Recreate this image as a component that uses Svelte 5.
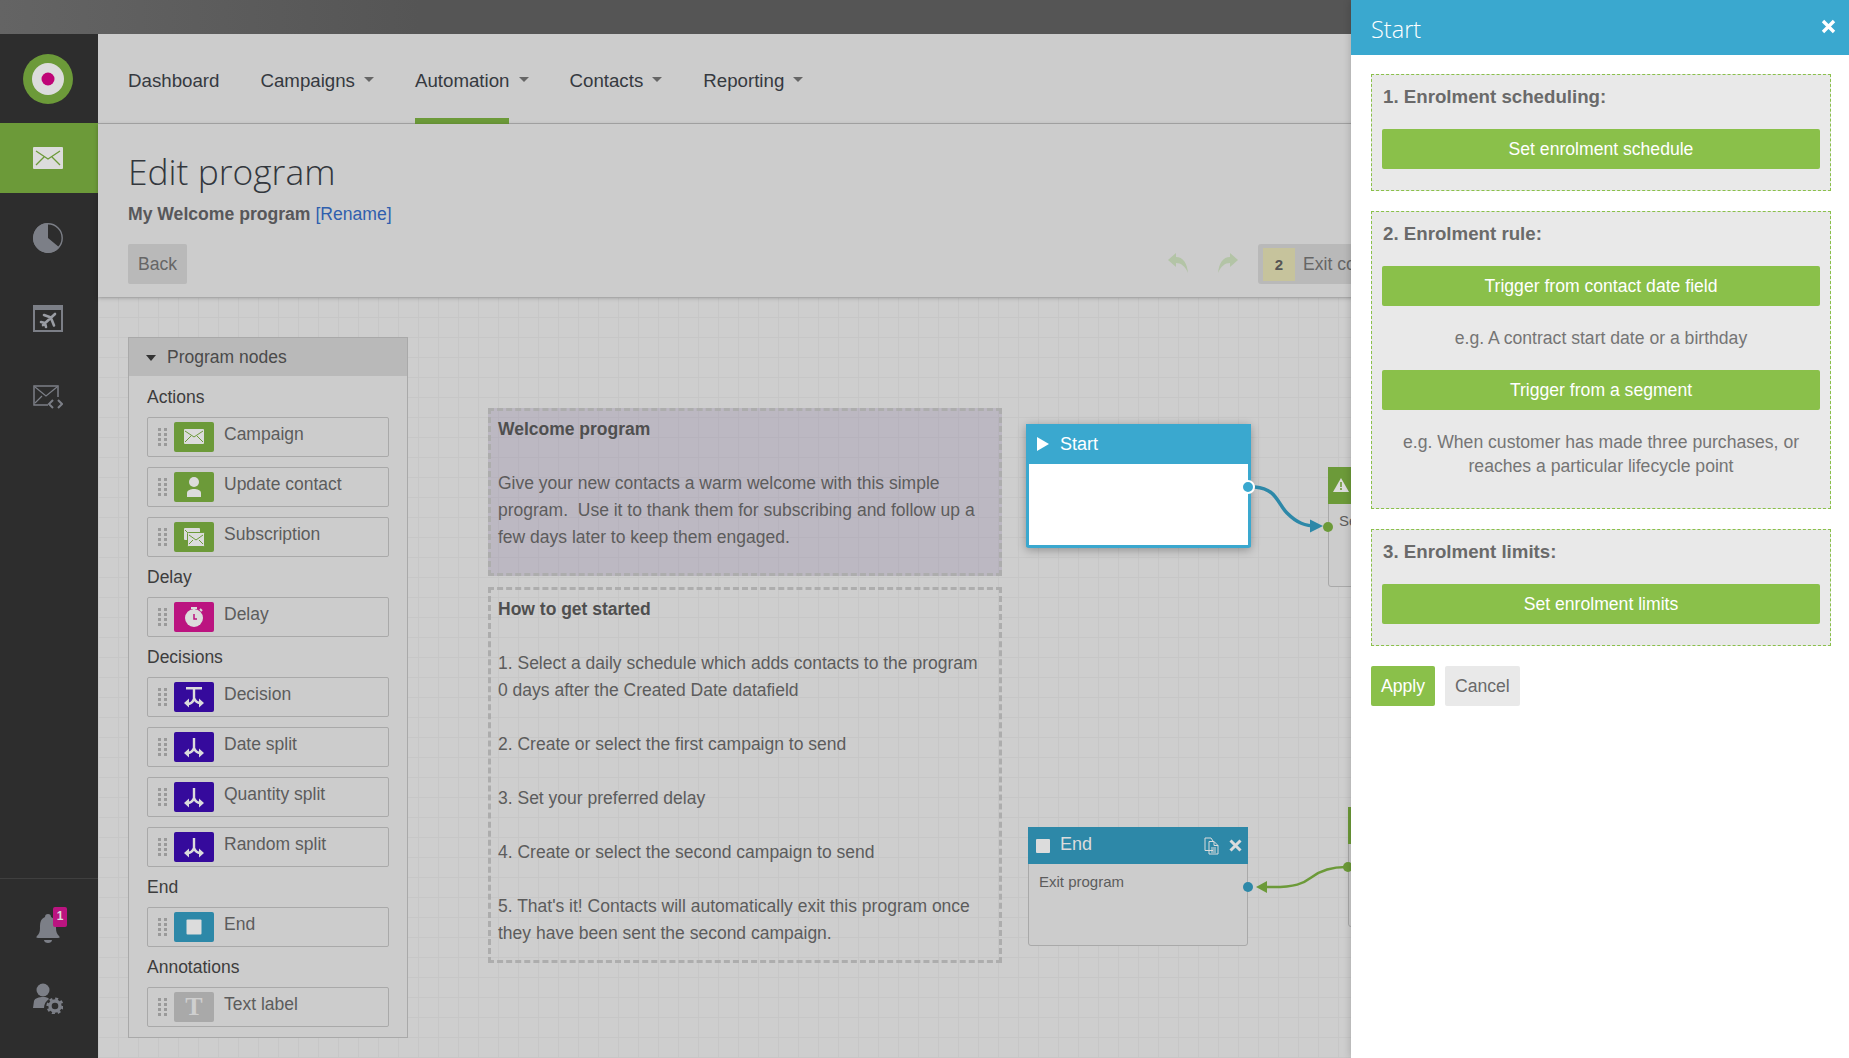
<script>
    const navItems = [
        { name: 'Dashboard' },
        { name: 'Campaigns', caret: true },
        { name: 'Automation', caret: true, active: true },
        { name: 'Contacts', caret: true },
        { name: 'Reporting', caret: true },
    ]

    const groups = [
        { title: 'Actions', items: [
            { name: 'Campaign', icon: 'mail', tone: 'green' },
            { name: 'Update contact', icon: 'person', tone: 'green' },
            { name: 'Subscription', icon: 'mails', tone: 'green' },
        ] },
        { title: 'Delay', items: [
            { name: 'Delay', icon: 'timer', tone: 'pink' },
        ] },
        { title: 'Decisions', items: [
            { name: 'Decision', icon: 'decision', tone: 'purple' },
            { name: 'Date split', icon: 'split', tone: 'purple' },
            { name: 'Quantity split', icon: 'split', tone: 'purple' },
            { name: 'Random split', icon: 'split', tone: 'purple' },
        ] },
        { title: 'End', items: [
            { name: 'End', icon: 'stop', tone: 'blue' },
        ] },
        { title: 'Annotations', items: [
            { name: 'Text label', icon: 'text', tone: 'grey' },
        ] },
    ]

    const started = [
        '1. Select a daily schedule which adds contacts to the program',
        '0 days after the Created Date datafield',
        '',
        '2. Create or select the first campaign to send',
        '',
        '3. Set your preferred delay',
        '',
        '4. Create or select the second campaign to send',
        '',
        "5. That's it! Contacts will automatically exit this program once",
        'they have been sent the second campaign.',
    ]
</script>

{#snippet nodeIcon(kind)}
    <svg width="40" height="30" viewBox="0 0 40 30">
        {#if kind === 'mail'}
            <rect x="10" y="7" width="20" height="15" rx="1" fill="#dcdcdc" />
            <path d="M11 9l9 6 9-6M11 20l6-6M29 20l-6-6" fill="none" stroke="#6c9a39" stroke-width="1" />
        {:else if kind === 'person'}
            <circle cx="20" cy="10" r="5" fill="#dcdcdc" />
            <path d="M13 25v-4c0-3 4-4 7-4s7 1 7 4v4z" fill="#dcdcdc" />
        {:else if kind === 'mails'}
            <rect x="10" y="6" width="16" height="12" rx="1" fill="#dcdcdc" />
            <path d="M11 8l3 3" fill="none" stroke="#6c9a39" />
            <rect x="13.500" y="10.500" width="17" height="14" rx="1" fill="#dcdcdc" stroke="#6c9a39" />
            <path d="M15 13l7 5 7-5M15 22l4-4M29 22l-4-4" fill="none" stroke="#6c9a39" />
        {:else if kind === 'timer'}
            <circle cx="20" cy="16" r="9" fill="#dcdcdc" />
            <rect x="17" y="5" width="6" height="2" fill="#dcdcdc" />
            <rect x="19" y="6" width="2" height="3" fill="#dcdcdc" />
            <path d="M26 7l2 2" stroke="#dcdcdc" stroke-width="2" />
            <path d="M20 12v5h3" fill="none" stroke="#bb1480" stroke-width="1.500" />
        {:else if kind === 'decision' || kind === 'split'}
            {#if kind === 'decision'}
                <rect x="12" y="5" width="16" height="2.500" fill="#dcdcdc" />
            {/if}
            <path d="M20 {kind === 'decision' ? 7 : 6}v10c-1 3-4 5-7 5M20 16c1 3 4 5 7 5" fill="none" stroke="#dcdcdc" stroke-width="2.400" />
            <path d="M10 21l5-4.500v9zM30 21l-5-4.500v9z" fill="#dcdcdc" />
        {:else if kind === 'stop'}
            <rect x="12.500" y="7.500" width="15" height="15" rx="1" fill="#dcdcdc" />
        {/if}
    </svg>
{/snippet}

<div class="page">
    <div class="top-strip"></div>

    <div class="shell">
        <aside class="sidebar">
            <div class="logo">
                <svg width="50" height="50" viewBox="0 0 50 50">
                    <circle cx="25" cy="25" r="25" fill="#6c9a39" />
                    <circle cx="25" cy="25" r="16" fill="#dcdcdc" />
                    <circle cx="25" cy="25" r="6.500" fill="#bf0477" />
                </svg>
            </div>
            <div class="side-item active">
                <svg width="30" height="23" viewBox="0 0 30 23">
                    <rect width="30" height="22" rx="1" fill="#dcdcdc" />
                    <path d="M3 4l12 8 12-8M3 18l8-8M27 18l-8-8" fill="none" stroke="#6c9a39" stroke-width="1.300" />
                </svg>
            </div>
            <div class="side-item">
                <svg width="30" height="30" viewBox="0 0 30 30">
                    <circle cx="15" cy="15" r="14.200" fill="none" stroke="#7c7f87" stroke-width="1.400" />
                    <path d="M15 0A15 15 0 1 0 26.500 24.600L15 15z" fill="#7c7f87" />
                </svg>
            </div>
            <div class="side-item">
                <svg width="30" height="27" viewBox="0 0 30 27">
                    <rect x="1" y="1" width="28" height="25" fill="none" stroke="#7c7f87" stroke-width="2" />
                    <rect width="30" height="5" fill="#7c7f87" />
                    <path d="M10 20L22 9M18 12.500L11 10M18 13l3 7.500M12 18l-4-1M12 18l1 4" fill="none" stroke="#9a9da4" stroke-width="2.600" stroke-linecap="round" />
                </svg>
            </div>
            <div class="side-item">
                <svg width="30" height="26" viewBox="0 0 30 26">
                    <path d="M15 20H1V1h24v11" fill="none" stroke="#7c7f87" stroke-width="1.500" />
                    <path d="M2 2l11 9 11-9M2 18l7-7" fill="none" stroke="#7c7f87" stroke-width="1.200" />
                    <path d="M20 15l-4 4 4 4M25 15l4 4-4 4" fill="none" stroke="#7c7f87" stroke-width="2" />
                </svg>
            </div>

            <div class="side-bottom">
                <div class="bell">
                    <svg width="24" height="32" viewBox="0 0 24 32">
                        <path d="M12 1c-2 0-3 1-3 3C4 6 4 11 4 15c0 4-1 6-3 8-1 1-1 2 1 2h20c2 0 2-1 1-2-2-2-3-4-3-8 0-4 0-9-5-11 0-2-1-3-3-3z" fill="#7c7f87" />
                        <path d="M8 27h8c0 2-2 3-4 3s-4-1-4-3z" fill="#7c7f87" />
                    </svg>
                    <span class="badge">1</span>
                </div>
                <svg class="user-gear" width="30" height="31" viewBox="0 0 30 31">
                    <circle cx="10" cy="7" r="6.500" fill="#7c7f87" />
                    <path d="M0 25l1-7c1-3 5-4 9-4 3 0 5 .5 6 2-3 2-5 5-5 9z" fill="#7c7f87" />
                    <circle cx="22" cy="23" r="5" fill="none" stroke="#7c7f87" stroke-width="3.400" />
                    <circle cx="22" cy="23" r="7.400" fill="none" stroke="#7c7f87" stroke-width="2.400" stroke-dasharray="3 2.800" />
                </svg>
            </div>
        </aside>

        <div class="main">
            <nav class="nav">
                {#each navItems as item}
                    <a class="nav-item" class:active={item.active}>
                        <span class="nav-label">{item.name}</span>
                        {#if item.caret}<i class="caret"></i>{/if}
                    </a>
                {/each}
            </nav>

            <header class="head">
                <h1>Edit program</h1>
                <p class="subtitle"><b>My Welcome program</b> <a>[Rename]</a></p>
                <div class="toolbar">
                    <button class="btn-grey">Back</button>
                    <div class="tools">
                        <svg width="20" height="20" viewBox="0 0 20 20"><path d="M0 7l8-7v4c7 0 11 6 12 16-3-7-7-10-12-10v4z" fill="#b3c4a6" /></svg>
                        <svg class="redo" width="20" height="20" viewBox="0 0 20 20"><path d="M20 7l-8-7v4C5 4 1 10 0 20c3-7 7-10 12-10v4z" fill="#b3c4a6" /></svg>
                        <button class="exit-btn"><span class="count">2</span>Exit contacts</button>
                    </div>
                </div>
            </header>

            <section class="canvas">
                <div class="palette">
                    <div class="palette-head"><i class="palette-arrow"></i>Program nodes</div>
                    <div class="palette-body">
                        {#each groups as group}
                            <div class="group-title">{group.title}</div>
                            {#each group.items as item}
                                <div class="palette-item">
                                    <span class="grip">{#each Array(8) as _}<i></i>{/each}</span>
                                    <span class="node-icon {item.tone}">
                                        {#if item.icon === 'text'}
                                            <span class="serif-t">T</span>
                                        {:else}
                                            {@render nodeIcon(item.icon)}
                                        {/if}
                                    </span>
                                    <span class="item-name">{item.name}</span>
                                </div>
                            {/each}
                        {/each}
                    </div>
                </div>

                <div class="note welcome">
                    <b>Welcome program</b><br /><br />
                    Give your new contacts a warm welcome with this simple<br />
                    program.&nbsp; Use it to thank them for subscribing and follow up a<br />
                    few days later to keep them engaged.
                </div>

                <div class="note started">
                    <b>How to get started</b><br /><br />
                    {#each started as line}
                        {line}<br />
                    {/each}
                </div>

                <div class="node start-node">
                    <div class="start-head">
                        <svg width="12" height="14" viewBox="0 0 12 14"><path d="M0 0l12 7-12 7z" fill="#fff" /></svg>
                        Start
                    </div>
                    <div class="start-body"></div>
                    <i class="port start-port"></i>
                </div>

                <div class="node end-node">
                    <div class="end-head">
                        <i class="end-square"></i>
                        <span>End</span>
                        <svg class="copy" width="16" height="18" viewBox="0 0 16 18">
                            <path d="M9 13.500H1V1h6l2 3M5 4.500h5l4 4V17H5zM10 4.500v4h4M7 11h5M7 13h5M7 15h5" fill="none" stroke="#dcdcdc" stroke-width="1" />
                        </svg>
                        <svg width="13" height="13" viewBox="0 0 13 13"><path d="M1.500 1.500l10 10M11.500 1.500l-10 10" stroke="#dcdcdc" stroke-width="3" /></svg>
                    </div>
                    <div class="end-text">Exit program</div>
                    <i class="port end-port"></i>
                </div>

                <div class="node step-node first">
                    <div class="step-head">
                        <svg width="16" height="14" viewBox="0 0 16 14"><path d="M8 0l8 14H0z" fill="#dcdcdc" /><path d="M8 4v5M8 10v2" stroke="#6c9a39" stroke-width="1.600" /></svg>
                    </div>
                    <div class="step-text">Select</div>
                    <i class="dot"></i>
                </div>
                <div class="node step-node second">
                    <div class="step-head"></div>
                    <i class="dot"></i>
                </div>

                <svg class="wire-start" width="80" height="50" viewBox="0 0 80 50">
                    <path d="M2 2c22 2 22 16 32 26s18 13 30 13" fill="none" stroke="#2d88a8" stroke-width="3.500" />
                    <path d="M70 41l-13-6.500v13z" fill="#2d88a8" />
                </svg>
                <svg class="wire-end" width="100" height="32" viewBox="0 0 100 32">
                    <path d="M10 25c30 1 38-4 46-10s18-10 34-10" fill="none" stroke="#6c9a39" stroke-width="2.500" />
                    <path d="M0 25l11-6v12z" fill="#6c9a39" />
                </svg>
            </section>
        </div>
    </div>

    <aside class="panel">
        <div class="panel-head">
            <span>Start</span>
            <svg width="15" height="15" viewBox="0 0 15 15"><path d="M2 2l11 11M13 2L2 13" stroke="#fff" stroke-width="3.400" /></svg>
        </div>
        <div class="panel-body">
            <div class="step">
                <h3>1. Enrolment scheduling:</h3>
                <button class="btn-green wide">Set enrolment schedule</button>
            </div>
            <div class="step">
                <h3>2. Enrolment rule:</h3>
                <button class="btn-green wide">Trigger from contact date field</button>
                <p>e.g. A contract start date or a birthday</p>
                <button class="btn-green wide">Trigger from a segment</button>
                <p class="last">e.g. When customer has made three purchases, or<br />reaches a particular lifecycle point</p>
            </div>
            <div class="step">
                <h3>3. Enrolment limits:</h3>
                <button class="btn-green wide">Set enrolment limits</button>
            </div>
            <div class="actions">
                <button class="btn-green">Apply</button>
                <button class="btn-light">Cancel</button>
            </div>
        </div>
    </aside>
</div>

<style>
:global(html), :global(body) {
    height: 1058px;
    overflow: hidden;
}

:global(body) {
    margin: 0;
    background: #cecece;
}

.page {
    position: relative;
    height: 1058px;
    overflow: hidden;
    font-family: "Liberation Sans", Arial, sans-serif;
    color: #5c5c5c;
}

.top-strip {
    height: 34px;
    background: linear-gradient(90deg, #646464, #555555 420px);
}

.shell {
    display: flex;
    height: 1024px;
}

.sidebar {
    width: 98px;
    flex: none;
    background: #2d2d2d;
    display: flex;
    flex-direction: column;
}

.logo {
    height: 89px;
    padding: 20px 2px 0 0;
    box-sizing: border-box;
    display: flex;
    justify-content: center;
}

.side-item {
    height: 80px;
    box-sizing: border-box;
    padding-right: 2px;
    display: flex;
    align-items: center;
    justify-content: center;
}

.side-item.active {
    height: 70px;
    margin-bottom: 5px;
    background: #6c9a39;
}

.side-bottom {
    margin-top: auto;
    height: 180px;
    border-top: 1px solid #3f3f3f;
    box-sizing: border-box;
    display: flex;
    flex-direction: column;
    align-items: center;
    padding: 34px 2px 0 0;
}

.bell {
    position: relative;
    width: 24px;
    height: 32px;
}

.badge {
    position: absolute;
    left: 17px;
    top: -6px;
    width: 14px;
    height: 20px;
    border-radius: 2px;
    background: #bb1480;
    color: #ddd;
    font-size: 12px;
    font-weight: 700;
    line-height: 18px;
    text-align: center;
}

.user-gear {
    margin-top: 38px;
}

.main {
    flex: 1;
    min-width: 0;
    display: flex;
    flex-direction: column;
    background: #cccccc;
}

.nav {
    height: 90px;
    box-sizing: border-box;
    border-bottom: 1px solid #a9a9a9;
    padding: 0 0 0 30px;
    display: flex;
    gap: 41px;
}

.nav-item {
    position: relative;
    display: flex;
    align-items: center;
    padding-top: 4px;
    color: #35393f;
    font-size: 18.700px;
}

.nav-item.active::after {
    content: "";
    position: absolute;
    left: 0;
    width: 94px;
    bottom: -1px;
    height: 6px;
    background: #6c9a39;
}

.caret {
    width: 0;
    height: 0;
    margin: -3px 0 0 9px;
    border-left: 5px solid transparent;
    border-right: 5px solid transparent;
    border-top: 5px solid #666;
}

.head {
    height: 173px;
    box-sizing: border-box;
    padding: 25px 0 0 30px;
    position: relative;
    z-index: 1;
    background: #cccccc;
    box-shadow: 0 1px 4px rgba(0, 0, 0, .25);
}

h1 {
    margin: 0;
    font: 300 35.400px/44px "Open Sans", sans-serif;
    color: #33373d;
}

.subtitle {
    margin: 0;
    padding-top: 9px;
    font-size: 17.600px;
    line-height: 24px;
}

.subtitle b {
    color: #57575a;
}

.subtitle a {
    color: #2f5fae;
}

.toolbar {
    display: flex;
    margin-top: 18px;
}

button {
    font-family: inherit;
    border: 0;
    cursor: pointer;
}

.btn-grey {
    width: 59px;
    height: 40px;
    padding: 0;
    border-radius: 2px;
    background: #b9b9b9;
    color: #666;
    font-size: 17.600px;
}

.tools {
    margin-left: 981px;
    display: flex;
    align-items: center;
}

.tools svg {
    margin-bottom: 3px;
}

.tools .redo {
    margin-left: 30px;
}

.exit-btn {
    margin-left: 20px;
    height: 40px;
    padding: 0 14px 0 5px;
    display: flex;
    align-items: center;
    gap: 8px;
    border-radius: 3px;
    background: #b9b9b9;
    color: #666;
    font-size: 17.600px;
    white-space: nowrap;
}

.count {
    width: 32px;
    height: 33px;
    line-height: 33px;
    background: #c6c39c;
    color: #555;
    font-size: 15px;
    font-weight: 700;
    text-align: center;
}

.canvas {
    flex: 1;
    position: relative;
    padding: 40px 0 0 30px;
    background-color: #cecece;
    background-image:
        linear-gradient(#c7c7c7 1px, transparent 1px),
        linear-gradient(90deg, #c7c7c7 1px, transparent 1px);
    background-size: 20px 20px;
}

.palette {
    width: 280px;
    height: 701px;
    box-sizing: border-box;
    border: 1px solid #a9a9a9;
    background: #cccccc;
}

.palette-head {
    height: 38px;
    display: flex;
    align-items: center;
    box-sizing: border-box;
    padding: 1px 0 0 17px;
    background: #b9b9b9;
    font-size: 17.500px;
    color: #4a4a4a;
}

.palette-arrow {
    width: 0;
    height: 0;
    margin-right: 11px;
    border-left: 5px solid transparent;
    border-right: 5px solid transparent;
    border-top: 6px solid #333;
}

.palette-body {
    padding: 11px 18px 0;
}

.group-title {
    height: 20px;
    line-height: 20px;
    margin-bottom: 10px;
    font-size: 17.500px;
    color: #3d3d3d;
}

.palette-item {
    height: 40px;
    box-sizing: border-box;
    margin-bottom: 10px;
    border: 1px solid #a9a9a9;
    border-radius: 2px;
    padding-left: 10px;
    display: flex;
    align-items: center;
}

.grip {
    width: 9px;
    display: grid;
    grid-template-columns: 3px 3px;
    gap: 2px 3px;
    margin-right: 7px;
}

.grip i {
    height: 3px;
    background: #9a9a9a;
}

.node-icon {
    width: 40px;
    height: 30px;
    border-radius: 2px;
    display: flex;
    align-items: center;
    justify-content: center;
}

.green { background: #6c9a39; }
.pink { background: #bb1480; }
.purple { background: #350a9c; }
.blue { background: #2d88a8; }
.grey { background: #a9a9a9; }

.serif-t {
    font: 700 26px/30px "Liberation Serif", serif;
    color: #cfcfcf;
}

.item-name {
    margin-left: 10px;
    padding-bottom: 5px;
    font-size: 17.500px;
    color: #5c5c5c;
}

.note {
    position: absolute;
    left: 390px;
    width: 514px;
    box-sizing: border-box;
    border: 3px dashed #adadad;
    padding: 5px 7px;
    font-size: 17.500px;
    line-height: 27px;
    white-space: nowrap;
}

.note b {
    color: #4f4f4f;
}

.welcome {
    top: 111px;
    height: 168px;
    background: rgba(120, 100, 150, .2);
}

.started {
    top: 290px;
    height: 376px;
    padding-top: 6px;
}

.node {
    position: absolute;
    box-sizing: border-box;
    border-radius: 3px;
}

.start-node {
    left: 928px;
    top: 127px;
    width: 225px;
    height: 124px;
    border: 3px solid #3aa8cf;
    border-top: 0;
    background: #fff;
    box-shadow: 0 2px 10px rgba(0, 0, 0, .3);
    z-index: 2;
}

.start-head {
    height: 40px;
    margin: 0 -3px;
    padding-left: 11px;
    display: flex;
    align-items: center;
    gap: 11px;
    background: #3aa8cf;
    color: #fff;
    font-size: 18px;
}

.port {
    position: absolute;
    border-radius: 50%;
}

.start-port {
    right: -7px;
    top: 56px;
    width: 10px;
    height: 10px;
    border: 2px solid #fff;
    background: #3aa8cf;
}

.end-node {
    left: 930px;
    top: 530px;
    width: 220px;
    height: 119px;
    border: 1px solid #a9a9a9;
    background: #cccccc;
}

.end-head {
    height: 37px;
    margin: -1px -1px 0;
    padding: 0 6px 0 8px;
    display: flex;
    align-items: center;
    background: #2d88a8;
    color: #dcdcdc;
    font-size: 18px;
}

.end-head span {
    margin-left: 10px;
    flex: 1;
    padding-bottom: 2px;
}

.end-square {
    width: 14px;
    height: 14px;
    border-radius: 1px;
    background: #dcdcdc;
}

.copy {
    margin-right: 9px;
}

.end-text {
    padding: 8px 0 0 10px;
    font-size: 15px;
    line-height: 20px;
}

.end-port {
    right: -6px;
    top: 54px;
    width: 10px;
    height: 10px;
    background: #2d88a8;
}

.step-node {
    width: 200px;
    height: 120px;
    border: 1px solid #a9a9a9;
    background: #cccccc;
}

.step-node.first {
    left: 1230px;
    top: 170px;
}

.step-node.second {
    left: 1250px;
    top: 510px;
}

.step-head {
    height: 37px;
    margin: -1px -1px 0;
    padding: 11px 0 0 5px;
    box-sizing: border-box;
    background: #6c9a39;
}

.step-text {
    padding: 8px 0 0 10px;
    font-size: 15px;
}

.dot {
    position: absolute;
    left: -6px;
    top: 54px;
    width: 10px;
    height: 10px;
    border-radius: 50%;
    background: #6c9a39;
}

.wire-start {
    position: absolute;
    left: 1155px;
    top: 188px;
    z-index: 3;
}

.wire-end {
    position: absolute;
    left: 1158px;
    top: 565px;
}

.panel {
    position: absolute;
    top: 0;
    right: 0;
    width: 498px;
    height: 1058px;
    background: #fff;
    z-index: 5;
    box-shadow: 0 0 8px rgba(0, 0, 0, .2);
}

.panel-head {
    height: 55px;
    box-sizing: border-box;
    padding: 0 13px 0 20px;
    display: flex;
    justify-content: space-between;
    align-items: flex-start;
    background: #3aa8cf;
    color: #fff;
    font: 300 23.500px/58px "Open Sans", sans-serif;
}

.panel-head svg {
    margin-top: 19px;
}

.panel-body {
    padding: 19px 18px 0 20px;
}

.step {
    box-sizing: border-box;
    margin-bottom: 20px;
    padding: 9px 10px 21px;
    border: 1px dashed #8ac04a;
    background: #e9e9e9;
}

.step h3 {
    margin: 0 0 20px;
    padding-left: 1px;
    font-size: 18.700px;
    line-height: 25px;
    color: #6a6a6a;
}

.step p {
    margin: 20px 0;
    font-size: 17.600px;
    line-height: 24px;
    text-align: center;
    color: #757575;
}

.step p.last {
    margin-bottom: 9px;
}

.btn-green {
    height: 40px;
    padding: 0 10px;
    border-radius: 2px;
    background: #8ac04a;
    color: #fff;
    font-size: 17.600px;
}

.wide {
    display: block;
    width: 100%;
}

.actions {
    display: flex;
    gap: 10px;
}

.btn-light {
    height: 40px;
    padding: 0 10px;
    border-radius: 2px;
    background: #e9e9e9;
    color: #6a6a6a;
    font-size: 17.600px;
}
</style>
